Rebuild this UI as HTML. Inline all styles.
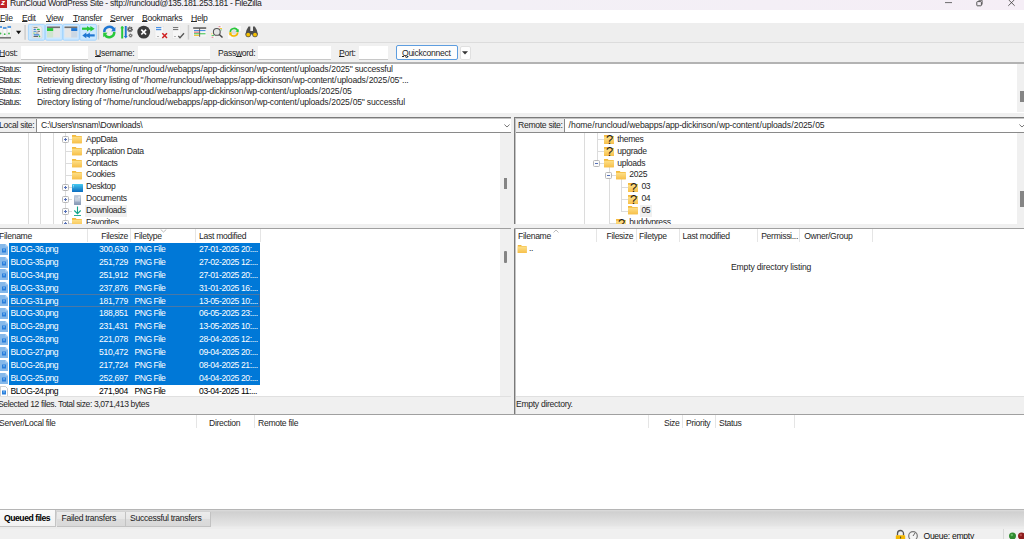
<!DOCTYPE html>
<html><head><meta charset="utf-8">
<style>
*{margin:0;padding:0;box-sizing:border-box}
html,body{width:1024px;height:539px;overflow:hidden;background:#f0f0f0;font-family:"Liberation Sans",sans-serif;font-size:8.6px;letter-spacing:-0.3px;color:#262626}
.a{position:absolute}
.t{position:absolute;white-space:nowrap;line-height:10px}
#title{left:0;top:0;width:1024px;height:10px;background:linear-gradient(90deg,#f2f0f6,#f3f0f6 50%,#f5eef6);overflow:hidden}
#menu{left:0;top:10px;width:1024px;height:13px;background:#fff}
#tool{left:0;top:23px;width:1024px;height:19px;background:#eeeeee}
#qc{left:0;top:42px;width:1024px;height:21px;background:#f0f0f0;border-top:1px solid #dcdcdc}
#log{left:0;top:62px;width:1024px;height:51px;background:#fff;border-top:2px solid #b3b3b3;letter-spacing:-0.21px}
.u{text-decoration:underline}
u{text-underline-offset:0px}
s{text-decoration:none;padding:0 0.45px}
.in{position:absolute;background:#fff;border-bottom:1px solid #c8c8c8}
.sel{background:#0078d7;color:#fff}
.vl{width:1px;background:#dcdcdc}
.hl{height:1px;background:#dcdcdc}
.pb{width:7px;height:7px;border:1px solid #b8b8b8;background:#fbfbfb;border-radius:1.5px}
.pb i{position:absolute;left:1px;top:2px;width:3px;height:1px;background:#5570b8}
.pb b{position:absolute;left:2px;top:1px;width:1px;height:3px;background:#5570b8}
.fold{width:10px;height:9px;overflow:visible}
.row{left:0;width:260px;height:12.8px}
.row .t{top:1.8px}
.fi{position:absolute;left:0;top:1px;width:8px;height:10px;background:#e9f1fb;border:1px solid #6d9fd6}
.fi i{position:absolute;left:1px;top:3px;width:4px;height:4px;background:#2b7ad8}
.hdrsep{position:absolute;top:0;width:1px;height:13px;background:#e5e5e5}
</style></head><body>
<svg width="0" height="0" style="position:absolute">
<defs>
<linearGradient id="gf" x1="0" y1="0" x2="0" y2="1"><stop offset="0" stop-color="#fde08a"/><stop offset="1" stop-color="#f7c04a"/></linearGradient>
<linearGradient id="gd" x1="0" y1="0" x2="0" y2="1"><stop offset="0" stop-color="#45c8f0"/><stop offset="1" stop-color="#0b6cc0"/></linearGradient>
<linearGradient id="gdoc" x1="0" y1="0" x2="0" y2="1"><stop offset="0" stop-color="#c3cfdf"/><stop offset="1" stop-color="#8699b5"/></linearGradient>
</defs></svg>
<!-- title bar -->
<div id="title" class="a">
  <div class="a" style="left:0;top:0;width:7px;height:8px;background:#bf2026;overflow:hidden"><div class="t" style="left:1px;top:-2px;font-size:8px;font-weight:bold;color:#fff;font-style:italic">z</div></div>
  <div class="t" style="left:10px;top:-2px;color:#222">RunCloud WordPress Site - sftp://runcloud@135.181.253.181 - FileZilla</div>
  <svg class="a" style="left:940px;top:0" width="84" height="10" viewBox="940 0 84 10">
<path d="M945 2.6 H952" stroke="#4a4a4a" stroke-width="0.8"/>
<path d="M978.5 0.5 H982.3 V4.5" fill="none" stroke="#555" stroke-width="0.7"/>
<rect x="976.8" y="1.6" width="4.6" height="4.2" rx="0.6" fill="none" stroke="#444" stroke-width="0.9"/>
<path d="M1008.3 -0.5 L1014.7 5.8 M1014.7 -0.5 L1008.3 5.8" stroke="#3a3a3a" stroke-width="0.8"/>
</svg>
</div>
<!-- menu -->
<div id="menu" class="a">
  <div class="t" style="left:0;top:3px"><u>F</u>ile</div>
  <div class="t" style="left:22px;top:3px"><u>E</u>dit</div>
  <div class="t" style="left:46px;top:3px"><u>V</u>iew</div>
  <div class="t" style="left:73px;top:3px"><u>T</u>ransfer</div>
  <div class="t" style="left:110px;top:3px"><u>S</u>erver</div>
  <div class="t" style="left:142px;top:3px"><u>B</u>ookmarks</div>
  <div class="t" style="left:191px;top:3px"><u>H</u>elp</div>
</div>
<!-- toolbar -->
<div id="tool" class="a"></div>
<svg class="a" style="left:0;top:23px" width="270" height="19" viewBox="0 23 270 19">
<!-- site manager -->
<g>
<rect x="-1" y="26" width="3" height="10" fill="#f4f4f4"/>
<rect x="-1" y="26" width="3" height="2" fill="#5a9be0"/>
<rect x="3" y="27" width="3.5" height="10" fill="#fafafa" stroke="#d8d8d8" stroke-width="0.4"/>
<rect x="3" y="27" width="3.5" height="2" fill="#5a9be0"/>
<rect x="7.5" y="26" width="3.5" height="10" fill="#fafafa" stroke="#d8d8d8" stroke-width="0.4"/>
<rect x="7.5" y="26" width="3.5" height="2" fill="#5a9be0"/>
<circle cx="0.5" cy="33.5" r="0.9" fill="#3cb84a"/><circle cx="4.7" cy="34.2" r="0.9" fill="#3cb84a"/><circle cx="9" cy="33.5" r="0.9" fill="#3cb84a"/>
<rect x="-1" y="37" width="12" height="1.6" fill="#777"/>
</g>
<path d="M16 30.8 L21.2 30.8 L18.6 34.3 Z" fill="#111"/>
<rect x="24.3" y="25" width="1.6" height="14.8" fill="#cfcfcf"/>
<!-- toggle boxes -->
<rect x="28.4" y="24.4" width="16.3" height="15.8" rx="1.2" fill="#cce8ff" stroke="#99d1ff" stroke-width="0.8"/>
<rect x="45.6" y="24.4" width="16.8" height="15.8" rx="1.2" fill="#cce8ff" stroke="#99d1ff" stroke-width="0.8"/>
<rect x="63" y="24.4" width="16.3" height="15.8" rx="1.2" fill="#cce8ff" stroke="#99d1ff" stroke-width="0.8"/>
<rect x="79.8" y="24.4" width="16.6" height="15.8" rx="1.2" fill="#cce8ff" stroke="#99d1ff" stroke-width="0.8"/>
<!-- log doc -->
<path d="M32.2 26 L40.2 26 L42 27.8 L42 38 L32.2 38 Z" fill="#ececec" stroke="#cfcfcf" stroke-width="0.5"/>
<rect x="33.5" y="27" width="4" height="0.8" fill="#777"/>
<rect x="33.5" y="28.8" width="2.4" height="1.2" rx="0.6" fill="#2f7fd6"/><rect x="36.8" y="28.8" width="3" height="1.2" rx="0.6" fill="#34c34a"/>
<rect x="33.5" y="30.8" width="3" height="1.1" fill="#5596dd"/><rect x="37.5" y="30.8" width="2.5" height="1.1" fill="#777"/>
<rect x="33.5" y="32.5" width="1" height="1.2" fill="#34c34a"/><rect x="35.5" y="32.5" width="3" height="1.1" fill="#999"/>
<rect x="33.5" y="34.2" width="6" height="1.2" rx="0.6" fill="#2f7fd6"/>
<rect x="33.5" y="36" width="4.5" height="0.9" fill="#555"/><circle cx="39.5" cy="36.4" r="0.8" fill="#34c34a"/>
<!-- local tree window -->
<rect x="47" y="26.5" width="13" height="11" fill="#e6e6e6"/>
<rect x="47" y="26.5" width="13" height="1.6" fill="#6f6f6f"/>
<rect x="47" y="28.1" width="6.2" height="3" fill="#28c83a"/>
<rect x="47" y="31.6" width="6.2" height="5.9" fill="#cfe5cf"/>
<!-- remote tree window -->
<rect x="64.5" y="26.5" width="12.8" height="11" fill="#e6e6e6"/>
<rect x="64.5" y="26.5" width="12.8" height="1.6" fill="#6f6f6f"/>
<rect x="71.2" y="28.1" width="6.1" height="3" fill="#1f76d2"/>
<rect x="71.2" y="31.6" width="6.1" height="5.9" fill="#cad7e4"/>
<!-- queue arrows -->
<rect x="82" y="27.6" width="10" height="2.2" fill="#28c83a"/>
<path d="M87 25.9 L87 31.5 L90.7 28.7 Z M90.4 25.9 L90.4 31.5 L94.7 28.7 Z" fill="#28c83a"/>
<rect x="85" y="34.3" width="9.7" height="2.2" fill="#1f76d2"/>
<path d="M86.3 32.6 L86.3 38.2 L82.3 35.4 Z M89.8 32.6 L89.8 38.2 L85.8 35.4 Z" fill="#1f76d2"/>
<rect x="97.7" y="25" width="1.5" height="14.6" fill="#cfcfcf"/>
<!-- refresh -->
<path d="M104.3 32 A5.1 5.1 0 0 1 113.8 29.3" fill="none" stroke="#1f76d2" stroke-width="2.5"/>
<path d="M115.4 27 L115.4 31.6 L111 31.2 Z" fill="#1f76d2"/>
<path d="M114.3 32 A5.1 5.1 0 0 1 104.8 34.7" fill="none" stroke="#28c83a" stroke-width="2.5"/>
<path d="M103.2 37.2 L103.2 32.4 L107.6 32.8 Z" fill="#28c83a"/>
<!-- process queue -->
<rect x="121.2" y="26.5" width="2" height="12" fill="#28c83a"/>
<path d="M120.2 28.3 L122.2 26 L124.2 28.3 Z" fill="#28c83a"/>
<rect x="124.8" y="26" width="1.9" height="11" fill="#1f76d2"/>
<path d="M123.8 36 L125.75 38.5 L127.7 36 Z" fill="#1f76d2"/>
<circle cx="130" cy="29.3" r="2.3" fill="none" stroke="#5a5a5a" stroke-width="1.2" stroke-dasharray="1.1 0.7"/><circle cx="130" cy="29.3" r="1.5" fill="none" stroke="#5a5a5a" stroke-width="1.3"/>
<circle cx="130.6" cy="35.5" r="1.6" fill="none" stroke="#5a5a5a" stroke-width="0.9" stroke-dasharray="0.8 0.5"/><circle cx="130.6" cy="35.5" r="1" fill="none" stroke="#5a5a5a" stroke-width="1"/>
<!-- cancel -->
<circle cx="143.7" cy="32.1" r="6.4" fill="#3b3b3b"/>
<path d="M141.3 29.7 L146.1 34.5 M146.1 29.7 L141.3 34.5" stroke="#fff" stroke-width="1.7"/>
<!-- disconnect -->
<rect x="155" y="26.4" width="8.8" height="12" fill="#f7f7f7" stroke="#e0e0e0" stroke-width="0.4"/>
<rect x="156" y="27" width="5.3" height="1.2" fill="#4a90e2"/><rect x="156" y="29" width="5.3" height="1.2" fill="#4a90e2"/>
<rect x="157.5" y="36" width="1" height="0.8" fill="#555"/>
<path d="M162.3 33.3 L167 38 M167 33.3 L162.3 38" stroke="#d02020" stroke-width="1.5"/>
<!-- reconnect -->
<rect x="172.3" y="26.4" width="8.2" height="12" fill="#f7f7f7" stroke="#e0e0e0" stroke-width="0.4"/>
<rect x="173" y="27" width="5.3" height="1.1" fill="#777"/><rect x="173" y="29" width="5.3" height="1.1" fill="#777"/>
<rect x="174.5" y="36" width="1" height="0.8" fill="#555"/>
<path d="M178.3 36 L180 37.8 L184 33.3" fill="none" stroke="#555" stroke-width="1.3"/>
<rect x="187.7" y="25" width="1.5" height="14.6" fill="#cfcfcf"/>
<!-- filter -->
<rect x="193.2" y="27.6" width="6.3" height="9" fill="#f5f5f5"/>
<rect x="199.8" y="27.6" width="6.4" height="9" fill="#f5f5f5"/>
<rect x="193.2" y="27.3" width="13" height="1.5" fill="#555"/>
<rect x="194" y="30" width="11.5" height="1.1" fill="#4a90e2"/>
<rect x="194" y="31.6" width="5.5" height="1.1" fill="#e06a78"/>
<rect x="194" y="33.2" width="11.5" height="1.1" fill="#4ac85a"/>
<rect x="194" y="34.8" width="5.5" height="1.1" fill="#f0c030"/>
<rect x="199.2" y="28" width="0.9" height="8.8" fill="#555"/>
<!-- search -->
<rect x="218" y="25.5" width="4" height="5" fill="#fafafa"/>
<rect x="218.5" y="26.2" width="2" height="1" fill="#e07a88"/><rect x="219.5" y="28" width="2.5" height="0.9" fill="#f0c030"/><rect x="220.5" y="29.5" width="1.5" height="0.8" fill="#4ac85a"/>
<rect x="211" y="33" width="4" height="5" fill="#fafafa"/>
<rect x="211" y="33.5" width="1.5" height="0.8" fill="#f0c030"/><rect x="211.5" y="35" width="2.5" height="0.9" fill="#4ac85a"/><rect x="211.5" y="36.7" width="2" height="1" fill="#e07a88"/>
<circle cx="216.8" cy="31.9" r="3.4" fill="#e4e4e4" stroke="#555" stroke-width="1.1"/>
<path d="M219.3 34.4 L222.5 37.6" stroke="#444" stroke-width="1.4"/>
<!-- sync -->
<rect x="236" y="26" width="5" height="5" fill="#fafafa"/><rect x="228" y="34" width="5" height="5" fill="#fafafa"/>
<circle cx="234" cy="32.2" r="2.3" fill="#dcdcdc"/>
<path d="M230.3 32 A3.8 3.8 0 0 1 237.7 31" fill="none" stroke="#28c83a" stroke-width="1.6"/>
<path d="M238.7 29 L238.7 32.3 L235.6 31.6 Z" fill="#28c83a"/>
<path d="M237.7 32.4 A3.8 3.8 0 0 1 230.3 33.4" fill="none" stroke="#f5b800" stroke-width="1.6"/>
<path d="M229.3 35.4 L229.3 32.1 L232.4 32.8 Z" fill="#f5b800"/>
<!-- binoculars -->
<path d="M246.5 30 L248.5 26.6 L250.3 26.6 L250.3 31 L253 31 L253 26.6 L254.8 26.6 L256.8 30 L257.9 34.5 L245.4 34.5 Z" fill="#4e4e4e"/>
<circle cx="248.2" cy="34.6" r="2.7" fill="#4e4e4e"/><circle cx="255" cy="34.6" r="2.7" fill="#4e4e4e"/>
<circle cx="248.2" cy="34.7" r="1.9" fill="#f5c000"/><circle cx="255" cy="34.7" r="1.9" fill="#f5c000"/>
</svg>
<!-- quickconnect -->
<div id="qc" class="a">
  <div class="t" style="left:-1px;top:5px"><u>H</u>ost:</div>
  <div class="in" style="left:21px;top:3px;width:67px;height:14px"></div>
  <div class="t" style="left:95px;top:5px"><u>U</u>sername:</div>
  <div class="in" style="left:138px;top:3px;width:72px;height:14px"></div>
  <div class="t" style="left:218px;top:5px">Pass<u>w</u>ord:</div>
  <div class="in" style="left:258px;top:3px;width:73px;height:14px"></div>
  <div class="t" style="left:339px;top:5px"><u>P</u>ort:</div>
  <div class="in" style="left:359px;top:3px;width:29px;height:14px"></div>
  <div class="a" style="left:396px;top:2.4px;width:62px;height:14.4px;background:#fdfdfd;border:1px solid #5d9ddf;border-radius:2px"></div>
  <div class="t" style="left:402px;top:5px"><u>Q</u>uickconnect</div>
  <div class="a" style="left:459.5px;top:3px;width:11px;height:13.5px;background:#fdfdfd;border:1px solid #e0e0e0;border-radius:2px"></div><svg class="a" style="left:462px;top:8px" width="6" height="4" viewBox="0 0 6 4"><path d="M0 0.3 L6 0.3 L3 3.5 Z" fill="#333"/></svg>
</div>
<!-- log -->
<div id="log" class="a">
  <div class="t" style="left:-1.5px;top:0px;letter-spacing:-0.65px">Status:</div>
  <div class="t" style="left:37px;top:0px">Directory listing of "<s>/</s>home<s>/</s>runcloud<s>/</s>webapps<s>/</s>app-dickinson<s>/</s>wp-content<s>/</s>uploads<s>/</s>2025" successful</div>
  <div class="t" style="left:-1.5px;top:10.7px;letter-spacing:-0.65px">Status:</div>
  <div class="t" style="left:37px;top:10.7px">Retrieving directory listing of "<s>/</s>home<s>/</s>runcloud<s>/</s>webapps<s>/</s>app-dickinson<s>/</s>wp-content<s>/</s>uploads<s>/</s>2025<s>/</s>05"...</div>
  <div class="t" style="left:-1.5px;top:22.1px;letter-spacing:-0.65px">Status:</div>
  <div class="t" style="left:37px;top:22.1px">Listing directory <s>/</s>home<s>/</s>runcloud<s>/</s>webapps<s>/</s>app-dickinson<s>/</s>wp-content<s>/</s>uploads<s>/</s>2025<s>/</s>05</div>
  <div class="t" style="left:-1.5px;top:32.7px;letter-spacing:-0.65px">Status:</div>
  <div class="t" style="left:37px;top:32.7px">Directory listing of "<s>/</s>home<s>/</s>runcloud<s>/</s>webapps<s>/</s>app-dickinson<s>/</s>wp-content<s>/</s>uploads<s>/</s>2025<s>/</s>05" successful</div>
  <div class="a" style="left:1017px;top:0;width:7px;height:48px;background:#f0f0f0"></div>
  <div class="a" style="left:1020px;top:27px;width:4px;height:11px;background:#858585"></div>
</div>

<!-- local panel -->
<div class="a" style="left:0;top:117px;width:511px;height:1px;background:#7a7a7a"></div><div class="a" style="left:0;top:118px;width:511px;height:1px;background:#c4c4c4"></div>
<div class="a" style="left:0;top:119px;width:37px;height:14px;background:#efefef;border-right:1px solid #8a8a8a;border-bottom:1px solid #8a8a8a"></div>
<div class="t" style="left:-1px;top:120px">Local site:</div>
<div class="a" style="left:37px;top:119px;width:474px;height:14px;background:#fff;border-bottom:1px solid #8a8a8a"></div>
<div class="t" style="left:41px;top:120px">C:\Users\nsnam\Downloads\</div>
<svg class="a" style="left:503.5px;top:123.5px" width="6" height="4" viewBox="0 0 6 4"><path d="M0.4 0.5 L3 3 L5.6 0.5" fill="none" stroke="#555" stroke-width="0.8"/></svg>
<div class="a" style="left:0;top:133px;width:500px;height:91px;background:#fff;overflow:hidden" id="ltree">
  <div class="a vl" style="left:28px;top:0;height:92px"></div>
  <div class="a vl" style="left:40px;top:0;height:92px"></div>
  <div class="a vl" style="left:53px;top:0;height:92px"></div>
  <div class="a vl" style="left:65px;top:0;height:92px"></div>
<div class="a hl" style="left:65px;top:6.2px;width:7px"></div>
<div class="a pb" style="left:62px;top:3.2px"><i></i><b></b></div>
<svg class="a fold" style="left:72.4px;top:1.90px;width:9.8px;height:8.2px" viewBox="0 0 10 9" preserveAspectRatio="none"><path d="M0 0.3 Q0 0 0.3 0 L3.8 0 L4.6 1 L9.7 1 Q10 1 10 1.3 L10 8.7 Q10 9 9.7 9 L0.3 9 Q0 9 0 8.7 Z" fill="#f3b93a"/><rect x="0" y="1.8" width="10" height="7.2" rx="0.3" fill="url(#gf)"/></svg>
<div class="t" style="left:86px;top:0.70px">AppData</div>
<div class="a hl" style="left:65px;top:18.1px;width:7px"></div>
<svg class="a fold" style="left:72.4px;top:13.80px;width:9.8px;height:8.2px" viewBox="0 0 10 9" preserveAspectRatio="none"><path d="M0 0.3 Q0 0 0.3 0 L3.8 0 L4.6 1 L9.7 1 Q10 1 10 1.3 L10 8.7 Q10 9 9.7 9 L0.3 9 Q0 9 0 8.7 Z" fill="#f3b93a"/><rect x="0" y="1.8" width="10" height="7.2" rx="0.3" fill="url(#gf)"/></svg>
<div class="t" style="left:86px;top:12.60px">Application Data</div>
<div class="a hl" style="left:65px;top:30.0px;width:7px"></div>
<svg class="a fold" style="left:72.4px;top:25.70px;width:9.8px;height:8.2px" viewBox="0 0 10 9" preserveAspectRatio="none"><path d="M0 0.3 Q0 0 0.3 0 L3.8 0 L4.6 1 L9.7 1 Q10 1 10 1.3 L10 8.7 Q10 9 9.7 9 L0.3 9 Q0 9 0 8.7 Z" fill="#f3b93a"/><rect x="0" y="1.8" width="10" height="7.2" rx="0.3" fill="url(#gf)"/></svg>
<div class="t" style="left:86px;top:24.50px">Contacts</div>
<div class="a hl" style="left:65px;top:41.9px;width:7px"></div>
<svg class="a fold" style="left:72.4px;top:37.60px;width:9.8px;height:8.2px" viewBox="0 0 10 9" preserveAspectRatio="none"><path d="M0 0.3 Q0 0 0.3 0 L3.8 0 L4.6 1 L9.7 1 Q10 1 10 1.3 L10 8.7 Q10 9 9.7 9 L0.3 9 Q0 9 0 8.7 Z" fill="#f3b93a"/><rect x="0" y="1.8" width="10" height="7.2" rx="0.3" fill="url(#gf)"/></svg>
<div class="t" style="left:86px;top:36.40px">Cookies</div>
<div class="a hl" style="left:65px;top:53.8px;width:7px"></div>
<div class="a pb" style="left:62px;top:50.8px"><i></i><b></b></div>
<svg class="a fold" style="left:72.0px;top:50.60px;width:11px;height:8px" viewBox="0 0 11 8"><rect x="0" y="0" width="11" height="8" rx="0.5" fill="url(#gd)"/><rect x="1" y="1" width="0.8" height="0.8" fill="#fff" opacity="0.8"/><rect x="1" y="2.5" width="0.8" height="0.8" fill="#fff" opacity="0.8"/></svg>
<div class="t" style="left:86px;top:48.30px">Desktop</div>
<div class="a hl" style="left:65px;top:65.7px;width:7px"></div>
<div class="a pb" style="left:62px;top:62.7px"><i></i><b></b></div>
<svg class="a fold" style="left:72.0px;top:61.50px;width:10px;height:10px" viewBox="0 0 10 10"><rect x="2" y="0" width="7" height="10" rx="0.4" fill="url(#gdoc)"/><rect x="3" y="2.5" width="5" height="4" fill="#fff" opacity="0.35"/><rect x="6.5" y="1.5" width="1.2" height="1.2" fill="#fff"/></svg>
<div class="t" style="left:86px;top:60.20px">Documents</div>
<div class="a hl" style="left:65px;top:77.6px;width:7px"></div>
<div class="a pb" style="left:62px;top:74.6px"><i></i><b></b></div>
<div class="a" style="left:84.6px;top:72.4px;width:42px;height:11.7px;background:#f0f0f0"></div>
<svg class="a fold" style="left:72.0px;top:73.40px;width:10px;height:10px" viewBox="0 0 10 10"><path d="M5.5 0.5 L5.5 7.5 M2.3 4.5 L5.5 7.7 L8.7 4.5" fill="none" stroke="#12a58a" stroke-width="1.1"/><rect x="2" y="9" width="7" height="0.9" fill="#12a58a"/></svg>
<div class="t" style="left:86px;top:72.10px">Downloads</div>
<div class="a hl" style="left:65px;top:89.5px;width:7px"></div>
<div class="a pb" style="left:62px;top:86.5px"><i></i><b></b></div>
<svg class="a fold" style="left:72.4px;top:85.20px;width:9.8px;height:8.2px" viewBox="0 0 10 9" preserveAspectRatio="none"><path d="M0 0.3 Q0 0 0.3 0 L3.8 0 L4.6 1 L9.7 1 Q10 1 10 1.3 L10 8.7 Q10 9 9.7 9 L0.3 9 Q0 9 0 8.7 Z" fill="#f3b93a"/><rect x="0" y="1.8" width="10" height="7.2" rx="0.3" fill="url(#gf)"/></svg>
<div class="t" style="left:86px;top:84.00px">Favorites</div>
</div>
<div class="a" style="left:500px;top:133px;width:11px;height:91px;background:#f0f0f0"></div>
<div class="a" style="left:504px;top:178px;width:3px;height:11px;background:#858585"></div>

<div class="a" style="left:0;top:228px;width:511px;height:1px;background:#a0a0a0"></div>
<div class="a" style="left:0;top:229px;width:500px;height:167px;background:#fff;overflow:hidden">
  <div class="t" style="left:-1px;top:2px">Filename</div>
  <div class="hdrsep" style="left:87px"></div>
  <div class="t" style="right:372px;top:2px">Filesize</div>
  <div class="hdrsep" style="left:130px"></div>
  <div class="t" style="left:134px;top:2px">Filetype</div>
  <div class="hdrsep" style="left:195px"></div>
  <div class="t" style="left:199px;top:2px">Last modified</div>
  <div class="hdrsep" style="left:260px"></div>
  <svg class="a" style="left:160px;top:0" width="7" height="4" viewBox="0 0 7 4"><path d="M0.7 0.5 L3.5 3 L6.3 0.5" fill="none" stroke="#a0a0a0" stroke-width="0.7"/></svg>
  <div class="a" style="left:9px;top:13.7px;width:251px;height:141.9px;background:#0078d7"></div>
  <div class="a" style="left:9px;top:65px;width:251px;height:13px;border-top:1px solid #4a78a6;border-bottom:1px solid #4a78a6;border-right:1px solid #2f6aa8"></div>
  <div class="a" style="left:0;top:13px;width:260px;height:160px">
<div class="a row" style="top:0.00px;color:#fff"><svg class="a" style="left:0;top:1.6px" width="8" height="11" viewBox="0 0 8 11"><path d="M0 0 L5.5 0 L8 2.5 L8 11 L0 11 Z" fill="#86b9ea"/><path d="M5.5 0 L5.5 2.5 L8 2.5" fill="#b9d8f5"/><rect x="2" y="4.5" width="4" height="4" fill="#2a7fdc"/><rect x="3" y="5.3" width="2" height="1.2" fill="#7ab8f0"/></svg><div class="t" style="left:10.5px;letter-spacing:-0.5px">BLOG-36.png</div><div class="t" style="right:132px">300,630</div><div class="t" style="left:134.5px;letter-spacing:-0.5px">PNG File</div><div class="t" style="left:199px;letter-spacing:-0.4px">27-01-2025 20:...</div></div>
<div class="a row" style="top:12.93px;color:#fff"><svg class="a" style="left:0;top:1.6px" width="8" height="11" viewBox="0 0 8 11"><path d="M0 0 L5.5 0 L8 2.5 L8 11 L0 11 Z" fill="#86b9ea"/><path d="M5.5 0 L5.5 2.5 L8 2.5" fill="#b9d8f5"/><rect x="2" y="4.5" width="4" height="4" fill="#2a7fdc"/><rect x="3" y="5.3" width="2" height="1.2" fill="#7ab8f0"/></svg><div class="t" style="left:10.5px;letter-spacing:-0.5px">BLOG-35.png</div><div class="t" style="right:132px">251,729</div><div class="t" style="left:134.5px;letter-spacing:-0.5px">PNG File</div><div class="t" style="left:199px;letter-spacing:-0.4px">27-02-2025 12:...</div></div>
<div class="a row" style="top:25.86px;color:#fff"><svg class="a" style="left:0;top:1.6px" width="8" height="11" viewBox="0 0 8 11"><path d="M0 0 L5.5 0 L8 2.5 L8 11 L0 11 Z" fill="#86b9ea"/><path d="M5.5 0 L5.5 2.5 L8 2.5" fill="#b9d8f5"/><rect x="2" y="4.5" width="4" height="4" fill="#2a7fdc"/><rect x="3" y="5.3" width="2" height="1.2" fill="#7ab8f0"/></svg><div class="t" style="left:10.5px;letter-spacing:-0.5px">BLOG-34.png</div><div class="t" style="right:132px">251,912</div><div class="t" style="left:134.5px;letter-spacing:-0.5px">PNG File</div><div class="t" style="left:199px;letter-spacing:-0.4px">27-01-2025 20:...</div></div>
<div class="a row" style="top:38.79px;color:#fff"><svg class="a" style="left:0;top:1.6px" width="8" height="11" viewBox="0 0 8 11"><path d="M0 0 L5.5 0 L8 2.5 L8 11 L0 11 Z" fill="#86b9ea"/><path d="M5.5 0 L5.5 2.5 L8 2.5" fill="#b9d8f5"/><rect x="2" y="4.5" width="4" height="4" fill="#2a7fdc"/><rect x="3" y="5.3" width="2" height="1.2" fill="#7ab8f0"/></svg><div class="t" style="left:10.5px;letter-spacing:-0.5px">BLOG-33.png</div><div class="t" style="right:132px">237,876</div><div class="t" style="left:134.5px;letter-spacing:-0.5px">PNG File</div><div class="t" style="left:199px;letter-spacing:-0.4px">31-01-2025 16:...</div></div>
<div class="a row" style="top:51.72px;color:#fff"><svg class="a" style="left:0;top:1.6px" width="8" height="11" viewBox="0 0 8 11"><path d="M0 0 L5.5 0 L8 2.5 L8 11 L0 11 Z" fill="#86b9ea"/><path d="M5.5 0 L5.5 2.5 L8 2.5" fill="#b9d8f5"/><rect x="2" y="4.5" width="4" height="4" fill="#2a7fdc"/><rect x="3" y="5.3" width="2" height="1.2" fill="#7ab8f0"/></svg><div class="t" style="left:10.5px;letter-spacing:-0.5px">BLOG-31.png</div><div class="t" style="right:132px">181,779</div><div class="t" style="left:134.5px;letter-spacing:-0.5px">PNG File</div><div class="t" style="left:199px;letter-spacing:-0.4px">13-05-2025 10:...</div></div>
<div class="a row" style="top:64.65px;color:#fff"><svg class="a" style="left:0;top:1.6px" width="8" height="11" viewBox="0 0 8 11"><path d="M0 0 L5.5 0 L8 2.5 L8 11 L0 11 Z" fill="#86b9ea"/><path d="M5.5 0 L5.5 2.5 L8 2.5" fill="#b9d8f5"/><rect x="2" y="4.5" width="4" height="4" fill="#2a7fdc"/><rect x="3" y="5.3" width="2" height="1.2" fill="#7ab8f0"/></svg><div class="t" style="left:10.5px;letter-spacing:-0.5px">BLOG-30.png</div><div class="t" style="right:132px">188,851</div><div class="t" style="left:134.5px;letter-spacing:-0.5px">PNG File</div><div class="t" style="left:199px;letter-spacing:-0.4px">06-05-2025 23:...</div></div>
<div class="a row" style="top:77.58px;color:#fff"><svg class="a" style="left:0;top:1.6px" width="8" height="11" viewBox="0 0 8 11"><path d="M0 0 L5.5 0 L8 2.5 L8 11 L0 11 Z" fill="#86b9ea"/><path d="M5.5 0 L5.5 2.5 L8 2.5" fill="#b9d8f5"/><rect x="2" y="4.5" width="4" height="4" fill="#2a7fdc"/><rect x="3" y="5.3" width="2" height="1.2" fill="#7ab8f0"/></svg><div class="t" style="left:10.5px;letter-spacing:-0.5px">BLOG-29.png</div><div class="t" style="right:132px">231,431</div><div class="t" style="left:134.5px;letter-spacing:-0.5px">PNG File</div><div class="t" style="left:199px;letter-spacing:-0.4px">13-05-2025 10:...</div></div>
<div class="a row" style="top:90.51px;color:#fff"><svg class="a" style="left:0;top:1.6px" width="8" height="11" viewBox="0 0 8 11"><path d="M0 0 L5.5 0 L8 2.5 L8 11 L0 11 Z" fill="#86b9ea"/><path d="M5.5 0 L5.5 2.5 L8 2.5" fill="#b9d8f5"/><rect x="2" y="4.5" width="4" height="4" fill="#2a7fdc"/><rect x="3" y="5.3" width="2" height="1.2" fill="#7ab8f0"/></svg><div class="t" style="left:10.5px;letter-spacing:-0.5px">BLOG-28.png</div><div class="t" style="right:132px">221,078</div><div class="t" style="left:134.5px;letter-spacing:-0.5px">PNG File</div><div class="t" style="left:199px;letter-spacing:-0.4px">28-04-2025 12:...</div></div>
<div class="a row" style="top:103.44px;color:#fff"><svg class="a" style="left:0;top:1.6px" width="8" height="11" viewBox="0 0 8 11"><path d="M0 0 L5.5 0 L8 2.5 L8 11 L0 11 Z" fill="#86b9ea"/><path d="M5.5 0 L5.5 2.5 L8 2.5" fill="#b9d8f5"/><rect x="2" y="4.5" width="4" height="4" fill="#2a7fdc"/><rect x="3" y="5.3" width="2" height="1.2" fill="#7ab8f0"/></svg><div class="t" style="left:10.5px;letter-spacing:-0.5px">BLOG-27.png</div><div class="t" style="right:132px">510,472</div><div class="t" style="left:134.5px;letter-spacing:-0.5px">PNG File</div><div class="t" style="left:199px;letter-spacing:-0.4px">09-04-2025 20:...</div></div>
<div class="a row" style="top:116.37px;color:#fff"><svg class="a" style="left:0;top:1.6px" width="8" height="11" viewBox="0 0 8 11"><path d="M0 0 L5.5 0 L8 2.5 L8 11 L0 11 Z" fill="#86b9ea"/><path d="M5.5 0 L5.5 2.5 L8 2.5" fill="#b9d8f5"/><rect x="2" y="4.5" width="4" height="4" fill="#2a7fdc"/><rect x="3" y="5.3" width="2" height="1.2" fill="#7ab8f0"/></svg><div class="t" style="left:10.5px;letter-spacing:-0.5px">BLOG-26.png</div><div class="t" style="right:132px">217,724</div><div class="t" style="left:134.5px;letter-spacing:-0.5px">PNG File</div><div class="t" style="left:199px;letter-spacing:-0.4px">08-04-2025 21:...</div></div>
<div class="a row" style="top:129.30px;color:#fff"><svg class="a" style="left:0;top:1.6px" width="8" height="11" viewBox="0 0 8 11"><path d="M0 0 L5.5 0 L8 2.5 L8 11 L0 11 Z" fill="#86b9ea"/><path d="M5.5 0 L5.5 2.5 L8 2.5" fill="#b9d8f5"/><rect x="2" y="4.5" width="4" height="4" fill="#2a7fdc"/><rect x="3" y="5.3" width="2" height="1.2" fill="#7ab8f0"/></svg><div class="t" style="left:10.5px;letter-spacing:-0.5px">BLOG-25.png</div><div class="t" style="right:132px">252,697</div><div class="t" style="left:134.5px;letter-spacing:-0.5px">PNG File</div><div class="t" style="left:199px;letter-spacing:-0.4px">04-04-2025 20:...</div></div>
<div class="a row" style="top:142.23px;color:#000"><svg class="a" style="left:0;top:1.6px" width="8" height="11" viewBox="0 0 8 11"><path d="M0.4 0.4 L5.4 0.4 L7.6 2.6 L7.6 10.6 L0.4 10.6 Z" fill="#fff" stroke="#bcbcbc" stroke-width="0.8"/><rect x="2" y="4.5" width="4" height="4" fill="#2a7fdc"/><rect x="3" y="5.3" width="2" height="1.2" fill="#7ab8f0"/></svg><div class="t" style="left:10.5px;letter-spacing:-0.5px">BLOG-24.png</div><div class="t" style="right:132px">271,904</div><div class="t" style="left:134.5px;letter-spacing:-0.5px">PNG File</div><div class="t" style="left:199px;letter-spacing:-0.4px">03-04-2025 11:...</div></div>
  </div>
</div>
<div class="a" style="left:500px;top:229px;width:11px;height:167px;background:#f0f0f0"></div>
<div class="a" style="left:504px;top:251px;width:3px;height:12px;background:#858585;border-radius:1px"></div>
<div class="a" style="left:0;top:396px;width:511px;height:18px;background:#f0f0f0;border-top:1px solid #e0e0e0"></div>
<div class="t" style="left:-2px;top:399px;letter-spacing:-0.4px">Selected 12 files. Total size: 3,071,413 bytes</div>

<!-- remote panel -->
<div class="a" style="left:514px;top:117px;width:510px;height:1px;background:#7a7a7a"></div><div class="a" style="left:514px;top:118px;width:510px;height:1px;background:#c4c4c4"></div>
<div class="a" style="left:514px;top:117px;width:1px;height:107px;background:#7a7a7a"></div><div class="a" style="left:515px;top:118px;width:1px;height:106px;background:#c4c4c4"></div><div class="a" style="left:514px;top:228px;width:1px;height:186px;background:#7a7a7a"></div><div class="a" style="left:515px;top:229px;width:1px;height:185px;background:#c4c4c4"></div>
<div class="a" style="left:516px;top:119px;width:49px;height:14px;background:#efefef;border-right:1px solid #8a8a8a;border-bottom:1px solid #8a8a8a"></div>
<div class="t" style="left:518px;top:120px">Remote site:</div>
<div class="a" style="left:565px;top:119px;width:459px;height:14px;background:#fff;border-bottom:1px solid #8a8a8a"></div>
<svg class="a" style="left:1018.5px;top:123.5px" width="6" height="4" viewBox="0 0 6 4"><path d="M0.4 0.5 L3 3 L5.6 0.5" fill="none" stroke="#555" stroke-width="0.8"/></svg>
<div class="t" style="left:568px;top:120px;letter-spacing:-0.2px"><s>/</s>home<s>/</s>runcloud<s>/</s>webapps<s>/</s>app-dickinson<s>/</s>wp-content<s>/</s>uploads<s>/</s>2025<s>/</s>05</div>
<div class="a" style="left:516px;top:133px;width:501px;height:91px;background:#fff;overflow:hidden">
  <div class="a vl" style="left:68px;top:0;height:92px"></div>
<div class="a vl" style="left:80.7px;top:0;height:30.8px"></div>
<div class="a vl" style="left:92.8px;top:30.8px;height:59.5px"></div>
<div class="a vl" style="left:104.9px;top:42.7px;height:35.7px"></div>
<div class="a hl" style="left:80.7px;top:6.2px;width:7px"></div>
<svg class="a fold" style="left:87.7px;top:1.30px;height:10px" viewBox="0 0 10 10"><path d="M0 1.3 Q0 1 0.3 1 L3.8 1 L4.6 2 L9.7 2 Q10 2 10 2.3 L10 9.7 Q10 10 9.7 10 L0.3 10 Q0 10 0 9.7 Z" fill="#f3b93a"/><rect x="0" y="2.8" width="10" height="7.2" rx="0.3" fill="url(#gf)"/><text x="2" y="9.6" font-family="Liberation Sans" font-size="13" fill="#1a1a1a">?</text></svg>
<div class="t" style="left:101.2px;top:0.70px">themes</div>
<div class="a hl" style="left:80.7px;top:18.1px;width:7px"></div>
<svg class="a fold" style="left:87.7px;top:13.20px;height:10px" viewBox="0 0 10 10"><path d="M0 1.3 Q0 1 0.3 1 L3.8 1 L4.6 2 L9.7 2 Q10 2 10 2.3 L10 9.7 Q10 10 9.7 10 L0.3 10 Q0 10 0 9.7 Z" fill="#f3b93a"/><rect x="0" y="2.8" width="10" height="7.2" rx="0.3" fill="url(#gf)"/><text x="2" y="9.6" font-family="Liberation Sans" font-size="13" fill="#1a1a1a">?</text></svg>
<div class="t" style="left:101.2px;top:12.60px">upgrade</div>
<div class="a hl" style="left:80.7px;top:30.0px;width:7px"></div>
<div class="a pb" style="left:77.2px;top:27.0px"><i></i></div>
<svg class="a fold" style="left:88.1px;top:25.70px;width:9.8px;height:8.2px" viewBox="0 0 10 9" preserveAspectRatio="none"><path d="M0 0.3 Q0 0 0.3 0 L3.8 0 L4.6 1 L9.7 1 Q10 1 10 1.3 L10 8.7 Q10 9 9.7 9 L0.3 9 Q0 9 0 8.7 Z" fill="#f3b93a"/><rect x="0" y="1.8" width="10" height="7.2" rx="0.3" fill="url(#gf)"/></svg>
<div class="t" style="left:101.2px;top:24.50px">uploads</div>
<div class="a hl" style="left:92.8px;top:41.9px;width:7px"></div>
<div class="a pb" style="left:89.3px;top:38.9px"><i></i></div>
<svg class="a fold" style="left:100.2px;top:37.60px;width:9.8px;height:8.2px" viewBox="0 0 10 9" preserveAspectRatio="none"><path d="M0 0.3 Q0 0 0.3 0 L3.8 0 L4.6 1 L9.7 1 Q10 1 10 1.3 L10 8.7 Q10 9 9.7 9 L0.3 9 Q0 9 0 8.7 Z" fill="#f3b93a"/><rect x="0" y="1.8" width="10" height="7.2" rx="0.3" fill="url(#gf)"/></svg>
<div class="t" style="left:113.3px;top:36.40px">2025</div>
<div class="a hl" style="left:104.9px;top:53.8px;width:7px"></div>
<svg class="a fold" style="left:111.9px;top:48.90px;height:10px" viewBox="0 0 10 10"><path d="M0 1.3 Q0 1 0.3 1 L3.8 1 L4.6 2 L9.7 2 Q10 2 10 2.3 L10 9.7 Q10 10 9.7 10 L0.3 10 Q0 10 0 9.7 Z" fill="#f3b93a"/><rect x="0" y="2.8" width="10" height="7.2" rx="0.3" fill="url(#gf)"/><text x="2" y="9.6" font-family="Liberation Sans" font-size="13" fill="#1a1a1a">?</text></svg>
<div class="t" style="left:125.4px;top:48.30px">03</div>
<div class="a hl" style="left:104.9px;top:65.7px;width:7px"></div>
<svg class="a fold" style="left:111.9px;top:60.80px;height:10px" viewBox="0 0 10 10"><path d="M0 1.3 Q0 1 0.3 1 L3.8 1 L4.6 2 L9.7 2 Q10 2 10 2.3 L10 9.7 Q10 10 9.7 10 L0.3 10 Q0 10 0 9.7 Z" fill="#f3b93a"/><rect x="0" y="2.8" width="10" height="7.2" rx="0.3" fill="url(#gf)"/><text x="2" y="9.6" font-family="Liberation Sans" font-size="13" fill="#1a1a1a">?</text></svg>
<div class="t" style="left:125.4px;top:60.20px">04</div>
<div class="a hl" style="left:104.9px;top:77.6px;width:7px"></div>
<div class="a" style="left:123.9px;top:72.4px;width:12px;height:11.7px;background:#f0f0f0"></div>
<svg class="a fold" style="left:112.3px;top:73.30px;width:9.8px;height:8.2px" viewBox="0 0 10 9" preserveAspectRatio="none"><path d="M0 0.3 Q0 0 0.3 0 L3.8 0 L4.6 1 L9.7 1 Q10 1 10 1.3 L10 8.7 Q10 9 9.7 9 L0.3 9 Q0 9 0 8.7 Z" fill="#f3b93a"/><rect x="0" y="1.8" width="10" height="7.2" rx="0.3" fill="url(#gf)"/></svg>
<div class="t" style="left:125.4px;top:72.10px">05</div>
<div class="a hl" style="left:92.8px;top:89.5px;width:7px"></div>
<svg class="a fold" style="left:99.8px;top:84.60px;height:10px" viewBox="0 0 10 10"><path d="M0 1.3 Q0 1 0.3 1 L3.8 1 L4.6 2 L9.7 2 Q10 2 10 2.3 L10 9.7 Q10 10 9.7 10 L0.3 10 Q0 10 0 9.7 Z" fill="#f3b93a"/><rect x="0" y="2.8" width="10" height="7.2" rx="0.3" fill="url(#gf)"/><text x="2" y="9.6" font-family="Liberation Sans" font-size="13" fill="#1a1a1a">?</text></svg>
<div class="t" style="left:113.3px;top:84.00px">buddypress</div>
</div>
<div class="a" style="left:1017px;top:133px;width:7px;height:91px;background:#f0f0f0"></div>
<div class="a" style="left:1020px;top:191px;width:4px;height:16px;background:#858585"></div>
<div class="a" style="left:514px;top:228px;width:510px;height:1px;background:#a0a0a0"></div>
<div class="a" style="left:516px;top:229px;width:508px;height:167px;background:#fff;overflow:hidden">
  <div class="t" style="left:2px;top:2px">Filename</div>
  <svg class="a" style="left:37px;top:0" width="6" height="4" viewBox="0 0 6 4"><path d="M0.5 3.5 L3 1 L5.5 3.5" fill="none" stroke="#a0a0a0" stroke-width="0.7"/></svg>
  <div class="hdrsep" style="left:80px"></div>
  <div class="t" style="right:390.8px;top:2px">Filesize</div>
  <div class="hdrsep" style="left:120px"></div>
  <div class="t" style="left:123px;top:2px">Filetype</div>
  <div class="hdrsep" style="left:162.8px"></div>
  <div class="t" style="left:166.5px;top:2px">Last modified</div>
  <div class="hdrsep" style="left:240.7px"></div>
  <div class="t" style="left:245.2px;top:2px">Permissi...</div>
  <div class="hdrsep" style="left:283.4px"></div>
  <div class="t" style="left:288.2px;top:2px">Owner/Group</div>
  <div class="hdrsep" style="left:355.8px"></div>
  <svg class="a" style="left:1.4px;top:16px" width="10.4" height="8" viewBox="0 0 10 9"><path d="M0 0.3 Q0 0 0.3 0 L3.8 0 L4.6 1 L9.7 1 Q10 1 10 1.3 L10 8.7 Q10 9 9.7 9 L0.3 9 Q0 9 0 8.7 Z" fill="#f3b93a"/><rect x="0" y="1.8" width="10" height="7.2" rx="0.3" fill="url(#gf)"/></svg>
  <div class="t" style="left:13px;top:14px">..</div>
  <div class="t" style="left:215px;top:33px;letter-spacing:-0.17px">Empty directory listing</div>
</div>
<div class="a" style="left:516px;top:396px;width:508px;height:18px;background:#f0f0f0;border-top:1px solid #e0e0e0"></div>
<div class="t" style="left:516px;top:399px">Empty directory.</div>
<div class="a" style="left:511px;top:117px;width:3px;height:297px;background:#f0f0f0"></div>

<!-- queue -->
<div class="a" style="left:0;top:414px;width:1024px;height:1px;background:#a0a0a0"></div>
<div class="a" style="left:0;top:415px;width:1024px;height:94px;background:#fff">
  <div class="t" style="left:-1px;top:3px">Server/Local file</div>
  <div class="hdrsep" style="left:196px"></div>
  <div class="t" style="left:209px;top:3px">Direction</div>
  <div class="hdrsep" style="left:254px"></div>
  <div class="t" style="left:258px;top:3px">Remote file</div>
  <div class="hdrsep" style="left:648px"></div>
  <div class="t" style="left:664px;top:3px">Size</div>
  <div class="hdrsep" style="left:682px"></div>
  <div class="t" style="left:686px;top:3px">Priority</div>
  <div class="hdrsep" style="left:715px"></div>
  <div class="t" style="left:719px;top:3px">Status</div>
  <div class="hdrsep" style="left:794px"></div>
</div>
<!-- tabs -->
<div class="a" style="left:0;top:509px;width:1024px;height:20px;background:linear-gradient(#b5b5b5 0,#b5b5b5 1px,#dcdcdc 1px,#d0d0d0 3px,#e6e6e6 17px,#ececec 18px,#ececec 20px)"></div>
<div class="a" style="left:0;top:510px;width:56px;height:17px;background:linear-gradient(#fafafa,#f2f2f2);border-right:1px solid #c4c4c4;border-bottom:1px solid #c4c4c4"></div>
<div class="t" style="left:4px;top:513px;font-weight:bold;color:#000;letter-spacing:-0.45px">Queued files</div>
<div class="a" style="left:57px;top:512px;width:69px;height:15px;background:linear-gradient(#ececec,#e6e6e6 50%,#dcdcdc 51%,#d9d9d9);border-right:1px solid #c2c2c2;border-bottom:1px solid #c2c2c2"></div>
<div class="t" style="left:61.5px;top:513px;color:#222">Failed transfers</div>
<div class="a" style="left:126px;top:512px;width:85px;height:15px;background:linear-gradient(#ececec,#e6e6e6 50%,#dcdcdc 51%,#d9d9d9);border-right:1px solid #c2c2c2;border-bottom:1px solid #c2c2c2"></div>
<div class="t" style="left:130px;top:513px;color:#222">Successful transfers</div>
<!-- status bar -->
<div class="a" style="left:0;top:529px;width:1024px;height:10px;background:#f0f0f0"></div>
<svg class="a" style="left:894px;top:529px" width="130" height="10" viewBox="894 529 130 10">
<path d="M897.5 535.5 L897.5 533.5 A3 3 0 0 1 903.5 533.5 L903.5 535.5" fill="none" stroke="#555" stroke-width="1.3"/>
<rect x="895.8" y="535.3" width="9.4" height="5" rx="0.6" fill="#f5b800"/>
<rect x="900" y="536.5" width="1.1" height="2" fill="#553"/>
<circle cx="913" cy="536" r="4.3" fill="#f4f4f4" stroke="#777" stroke-width="1.2"/>
<path d="M913 536 L915 533" stroke="#555" stroke-width="0.9"/>
<rect x="1003" y="529" width="1" height="10" fill="#d8d8d8"/>
<circle cx="1012.5" cy="536" r="3.5" fill="#2f8a2f"/><circle cx="1011.8" cy="535" r="1.2" fill="#7fd07f" opacity="0.7"/>
<circle cx="1021.5" cy="536" r="3.5" fill="#8e1c1c"/><circle cx="1020.8" cy="535" r="1.2" fill="#d07070" opacity="0.6"/>
</svg>
<div class="t" style="left:923.5px;top:530.8px;color:#111">Queue: empty</div>
</body></html>
